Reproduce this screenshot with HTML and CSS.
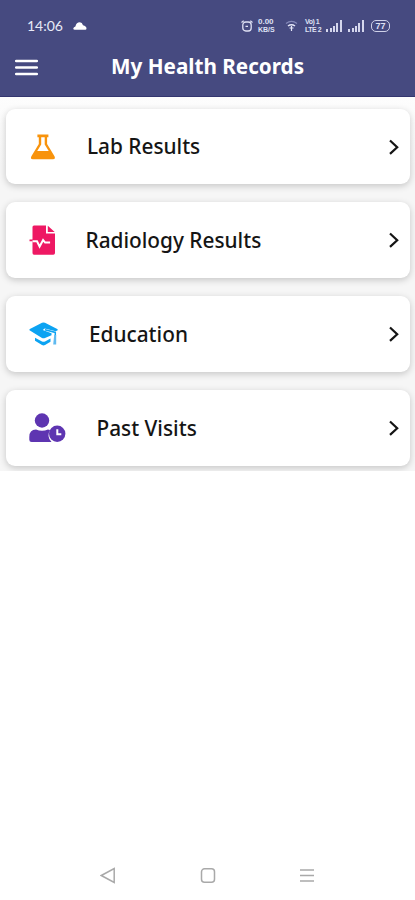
FILE: index.html
```html
<!DOCTYPE html>
<html lang="en">
<head>
<meta charset="utf-8">
<title>My Health Records</title>
<link rel="stylesheet" href="styles.css">
</head>
<body>
<div class="screen">
  <header class="header">
    <div class="status">
      <span class="time">14:06</span>
      <svg class="cloud" width="14" height="8" viewBox="0 0 14 8"><path d="M1.500 7.800Q0 7.600.3 6.200.8 4.800 2.400 4.400 3.400.4 6.800.3 9.200.4 10 3.200q3.300.8 3.500 3 0 1.600-1.200 1.600z" fill="#fff"/></svg>
      <svg class="alarm" width="12" height="12" viewBox="0 0 12 12" fill="none" stroke="#dfe1f4" stroke-width="1.300"><rect x="1.800" y="2" width="8.400" height="9" rx="3"/><path d="M.5 2.500 2.700.8M11.500 2.500 9.300.8M4.500 6.300H7"/></svg>
      <span class="tiny speed"><b>0.00</b><b>KB/S</b></span>
      <svg class="wifi" width="13" height="12" viewBox="0 0 13 12" fill="none"><path d="M1 3.500Q6.500-.7 12 3.500" stroke="#8589b9" stroke-width="1.200"/><path d="M3 6Q6.500 3.400 10 6" stroke="#e6e8f8" stroke-width="1.500"/><path d="M6.500 6v5M4.500 8h4" stroke="#e6e8f8" stroke-width="1.200"/></svg>
      <span class="tiny volte"><b>Vo) 1</b><b>LTE 2</b></span>
      <svg class="signal" width="16" height="12" viewBox="0 0 16 12"><path d="M0 9h2v3H0zM4 8h2v4H4zM7 6h2v6H7zM10 3h2v9h-2zM14 0h2v12h-2z" fill="#d5d7ed"/></svg>
      <svg class="signal second" width="16" height="12" viewBox="0 0 16 12"><path d="M0 9h2v3H0zM4 8h2v4H4zM7 6h2v6H7zM10 3h2v9h-2zM14 0h2v12h-2z" fill="#d5d7ed"/></svg>
      <span class="battery">77</span>
    </div>
    <div class="titlebar">
      <svg class="menu" width="23" height="17" viewBox="0 0 23 17"><path d="M1.200 2h20.600M1.200 8.500h20.600M1.200 15h20.600" stroke="#fff" stroke-width="2.500" stroke-linecap="round"/></svg>
      <h1 class="title">My Health Records</h1>
    </div>
  </header>
  <main class="list">
    <div class="card first">
      <svg class="icon flask" width="26" height="26" viewBox="0 0 26 26"><path fill="#f8930c" fill-rule="evenodd" d="M7.400.6h11v2.700h-1.300v6.600l7.400 12.300q1.300 3-1.500 3H2.800q-2.800 0-1.400-3L8.800 9.900V3.300H7.400zM11.200 3.300v7.200l-4 6.400h11.500l-4-6.400V3.300z"/></svg>
      <span class="label lab">Lab Results</span>
      <svg class="chev" width="12" height="18" viewBox="0 0 12 18"><path d="m2 2.500 7.200 6.700L2 15.900"/></svg>
    </div>
    <div class="card">
      <svg class="icon file" width="27" height="31" viewBox="0 0 27 31"><path fill="#ee1863" d="M5 .5h12v8h9V28q0 1.700-1.700 1.700H5q-1.500 0-1.500-1.700V2Q3.500.5 5 .5zM18.800.8 25.700 7h-6.900zM.5 14.400H4v1.800H.5z"/><path d="M3.500 16.200h4.500l2.600 5.300 3.500-6.500 2 2.500h5" fill="none" stroke="#fff" stroke-width="2"/></svg>
      <span class="label radiology">Radiology Results</span>
      <svg class="chev" width="12" height="18" viewBox="0 0 12 18"><path d="m2 2.500 7.200 6.700L2 15.900"/></svg>
    </div>
    <div class="card">
      <svg class="icon cap" width="30" height="25" viewBox="0 0 30 25"><path fill="#0ca3f2" d="M13 .7q1.500-.5 3 0l12.200 6.200q1.200.8 0 1.600l-1.500.7-11-2.700-2 1.500 8.800 3.200v2.100l-6.500 2.800q-1.500.5-3 0L.9 8.500q-1.100-.8 0-1.600zM6 15.700l7 3.800q1.500.6 3 0l5.500-3v3.200L16 23q-1.500.8-3 0l-7-4.200z"/><path d="m16 7.800 10.300 2.600v4" fill="none" stroke="#0ca3f2" stroke-width="1.500"/><path fill="#60baf0" d="M25.200 13h2v9.500h-3z"/></svg>
      <span class="label education">Education</span>
      <svg class="chev" width="12" height="18" viewBox="0 0 12 18"><path d="m2 2.500 7.200 6.700L2 15.900"/></svg>
    </div>
    <div class="card">
      <svg class="icon visit" width="37" height="30" viewBox="0 0 37 30"><g fill="#5e35b1"><circle cx="13" cy="7.500" r="7.200"/><path d="M7 16.500q6 2.400 12 0 1.300 0 2 .4-3.800 6.800 1.500 12.100H2.600Q.3 29 .3 26.800V24q0-7.500 6.700-7.500z"/><circle cx="28.200" cy="20.800" r="8.200"/></g><path d="M28.300 16.200v5h4" fill="none" stroke="#fff" stroke-width="2"/></svg>
      <span class="label past">Past Visits</span>
      <svg class="chev" width="12" height="18" viewBox="0 0 12 18"><path d="m2 2.500 7.200 6.700L2 15.900"/></svg>
    </div>
  </main>
  <nav class="nav">
    <svg width="16" height="17" viewBox="0 0 16 17"><path d="m1.300 8.500 12.900-7v14z"/></svg>
    <svg width="16" height="17" viewBox="0 0 16 17"><rect x="1.500" y="1.800" width="13" height="13.500" rx="3"/></svg>
    <svg width="16" height="17" viewBox="0 0 16 17"><path d="M1 3h14M1 8.500h14M1 14h14"/></svg>
  </nav>
</div>
</body>
</html>
```
FILE: styles.css
```css
* { box-sizing: border-box; }
body { margin: 0; background: #fff; font-family: "Noto Sans", "Open Sans", sans-serif; }
svg { display: block; flex: none; }
.screen { width: 415px; height: 900px; display: flex; flex-direction: column; overflow: hidden; }
.header { height: 97px; background: #464a80; border-bottom: 1px solid #34366f; color: #fff; flex: none; }
.status { height: 46px; padding: 6px 0 0 27px; display: flex; align-items: center; }
.time { width: 37px; font: 14px/18px Lato, sans-serif; color: #e8eaf8; white-space: nowrap; }
.cloud { margin-left: 9px; }
.alarm { margin-left: 154px; }
.tiny { display: flex; flex-direction: column; font: 700 8px/8px "Liberation Sans", sans-serif; color: #dfe1f4; }
.tiny b { white-space: nowrap; }
.speed { width: 19px; margin-left: 5px; }
.speed b + b { font-size: 7px; }
.wifi { margin-left: 8px; }
.volte { width: 16px; margin-left: 7px; font-size: 7px; letter-spacing: -.5px; }
.signal { margin-left: 5px; }
.second { margin-left: 6px; }
.battery { width: 19px; height: 12px; margin-left: 7px; border: 1.500px solid #cfd1e8; border-radius: 5px; font: 700 9px/10px "Liberation Sans", sans-serif; text-align: center; color: #dfe1f4; }
.titlebar { height: 42px; padding-left: 15px; display: flex; align-items: center; }
.title { margin: 0 0 2px 73px; font-size: 20.700px; line-height: 30px; font-weight: 700; white-space: nowrap; }
.list { height: 374px; padding: 12px 5px 0 6px; background: linear-gradient(#fdfdfd, #f6f6f6 70px); display: flex; flex-direction: column; gap: 18px; overflow: hidden; flex: none; }
.card { height: 76px; background: #fff; border-radius: 9px; box-shadow: 0 2px 7px rgba(0, 0, 0, .2); display: flex; align-items: center; padding: 0 10px 0 23px; flex: none; }
.first { height: 75px; }
.label { color: #151515; font-size: 20.800px; line-height: 30px; font-weight: 500; white-space: nowrap; }
.flask { margin-left: 1px; }
.lab { margin: 0 0 1px 31px; }
.radiology { margin-left: 29.500px; }
.education { margin-left: 30px; }
.past { margin-left: 30.500px; }
.chev { margin-left: auto; fill: none; stroke: #151515; stroke-width: 2.200; }
.nav { margin-top: auto; height: 50px; padding: 0 100px; display: flex; align-items: center; justify-content: space-between; fill: none; stroke: #a9a9a9; stroke-width: 1.500; }
```
